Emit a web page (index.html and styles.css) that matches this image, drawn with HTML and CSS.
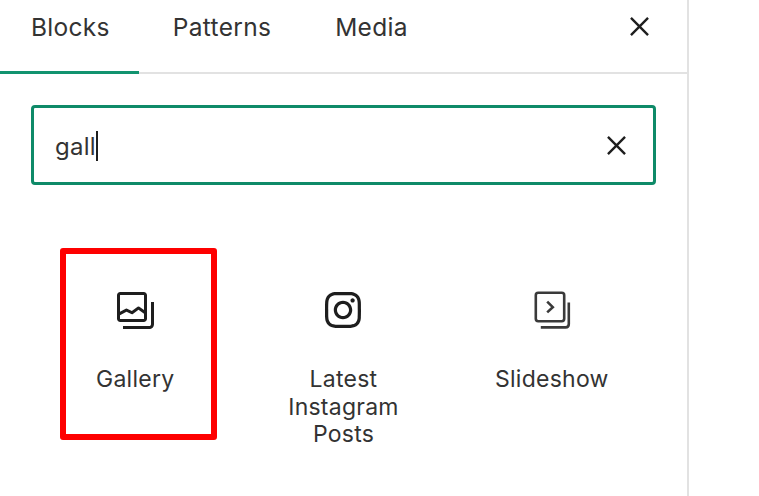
FILE: index.html
```html
<!DOCTYPE html>
<html lang="en">
  <head>
    <meta charset="utf-8" />
    <title>Block inserter</title>
    <link rel="stylesheet" href="styles.css">
  </head>
  <body>
    <div class="panel">
      <header class="tabs">
        <div class="tab active">Blocks</div>
        <div class="tab">Patterns</div>
        <div class="tab">Media</div>
        <svg class="close" viewBox="0 0 20 20"><path d="M1 1 19 19M19 1 1 19"/></svg>
      </header>
      <div class="search">
        <span class="search-text">gall</span><span class="caret"></span>
        <svg class="close clear" viewBox="0 0 20 20"><path d="M1 1 19 19M19 1 1 19"/></svg>
      </div>
      <main class="grid">
        <div class="item">
          <svg class="icon" viewBox="0 0 24 24"><path fill-rule="evenodd" d="M16.375 4.5H4.625a.125.125 0 0 0-.125.125v8.254l2.859-1.54a.75.75 0 0 1 .68-.016l2.384 1.142 2.89-2.074a.75.75 0 0 1 .874 0l2.313 1.66V4.625a.125.125 0 0 0-.125-.125zm.125 9.398-2.75-1.975-2.813 2.02a.75.75 0 0 1-.76.067l-2.444-1.17L4.5 14.583v1.792c0 .069.056.125.125.125h11.75a.125.125 0 0 0 .125-.125v-2.477zM4.625 3C3.728 3 3 3.728 3 4.625v11.75C3 17.273 3.728 18 4.625 18h11.75c.898 0 1.625-.727 1.625-1.625V4.625C18 3.728 17.273 3 16.375 3H4.625zM20 8v11c0 .69-.31 1-.999 1H6v1.5h13.001c1.52 0 2.499-.982 2.499-2.5V8H20z"/></svg>
          <div class="label">Gallery</div>
          <div class="highlight"></div>
        </div>
        <div class="item">
          <svg class="icon" viewBox="0 0 24 24"><path d="M12 4.622c2.403 0 2.688.01 3.637.052.877.04 1.354.187 1.67.31.42.163.72.358 1.036.673.315.315.51.615.673 1.035.123.317.27.794.31 1.67.043.95.052 1.235.052 3.638s-.01 2.688-.052 3.637c-.04.877-.187 1.354-.31 1.67-.163.42-.358.72-.673 1.036-.315.315-.615.51-1.035.673-.317.123-.794.27-1.67.31-.95.043-1.234.052-3.638.052s-2.688-.01-3.637-.052c-.877-.04-1.354-.187-1.67-.31-.42-.163-.72-.358-1.036-.673-.315-.315-.51-.615-.673-1.035-.123-.317-.27-.794-.31-1.67-.043-.95-.052-1.235-.052-3.638s.01-2.688.052-3.637c.04-.877.187-1.354.31-1.67.163-.42.358-.72.673-1.036.315-.315.615-.51 1.035-.673.317-.123.794-.27 1.67-.31.95-.043 1.235-.052 3.638-.052M12 3c-2.444 0-2.75.01-3.71.054s-1.613.196-2.185.418c-.592.23-1.094.538-1.594 1.04-.5.5-.807 1-1.037 1.593-.223.572-.375 1.226-.42 2.184C3.01 9.25 3 9.555 3 12s.01 2.75.054 3.71.196 1.613.418 2.186c.23.592.538 1.094 1.038 1.594s1.002.808 1.594 1.038c.572.222 1.227.375 2.185.418.96.044 1.266.054 3.71.054s2.75-.01 3.71-.054 1.613-.196 2.186-.418c.592-.23 1.094-.538 1.594-1.038s.808-1.002 1.038-1.594c.222-.572.375-1.227.418-2.185.044-.96.054-1.266.054-3.71s-.01-2.75-.054-3.71-.196-1.613-.418-2.186c-.23-.592-.538-1.094-1.038-1.594s-1.002-.808-1.594-1.038c-.572-.222-1.227-.375-2.185-.418C14.75 3.01 14.445 3 12 3zm0 4.378c-2.552 0-4.622 2.07-4.622 4.622s2.07 4.622 4.622 4.622 4.622-2.07 4.622-4.622S14.552 7.378 12 7.378zM12 15c-1.657 0-3-1.343-3-3s1.343-3 3-3 3 1.343 3 3-1.343 3-3 3zm4.804-8.884c-.596 0-1.08.484-1.08 1.08s.484 1.08 1.08 1.08c.596 0 1.08-.484 1.08-1.08s-.483-1.08-1.08-1.08z"/></svg>
          <div class="label">Latest Instagram Posts</div>
        </div>
        <div class="item">
          <svg class="icon line" viewBox="0 0 24 24"><rect x="3.9" y="3.4" width="14.2" height="14.2" rx="1.2"/><path d="M20.4 8.2V19c0 1-.6 1.7-1.6 1.7H6.4M9.6 7.8 12.4 10.6 9.6 13.2"/></svg>
          <div class="label">Slideshow</div>
        </div>
      </main>
    </div>
  </body>
</html>
```

FILE: styles.css
```css
html,
body {
  height: 100%;
  margin: 0;
  padding: 0;
  overflow: hidden;
  background: #fff;
  color: #333;
  font-family: Inter, 'Noto Sans', sans-serif;
  font-size: 23px;
  letter-spacing: 0.25px;
}
.panel {
  width: 689px;
  height: 100%;
  border-right: 2px solid #e2e2e2;
  box-sizing: border-box;
}
.tabs {
  display: flex;
  align-items: center;
  gap: 2px;
  height: 74px;
  padding-right: 38px;
  border-bottom: 2px solid #e2e2e2;
  box-sizing: border-box;
  font-size: 24.5px;
  letter-spacing: 0.3px;
}
.tab {
  display: flex;
  align-items: center;
  align-self: stretch;
  margin-bottom: -2px;
  padding: 0 30px 17px 32px;
  border-bottom: 3px solid transparent;
  box-sizing: border-box;
}
.tab.active {
  padding-left: 31px;
  padding-right: 29px;
  border-bottom-color: #12936f;
}
.close {
  width: 19px;
  height: 19px;
  margin-left: auto;
  margin-top: -20px;
  fill: none;
  stroke: #1e1e1e;
  stroke-width: 2.5;
}
.search {
  display: flex;
  align-items: center;
  height: 80px;
  margin: 31px 31px 0;
  padding: 2px 27px 0 21px;
  border: 3px solid #0e8a68;
  border-radius: 4px;
  box-sizing: border-box;
  font-size: 24px;
}
.caret {
  width: 2px;
  height: 30px;
  background: #1e1e1e;
}
.clear {
  margin-top: -2px;
}
.grid {
  display: grid;
  grid-template-columns: repeat(3, 1fr);
  margin: 63px 31px 0;
}
.item {
  position: relative;
  display: flex;
  flex-direction: column;
  align-items: center;
  padding: 38px 29px 0;
  text-align: center;
}
.icon {
  width: 48px;
  height: 48px;
  fill: #1e1e1e;
}
.icon.line {
  fill: none;
  stroke: #3a3a3a;
  stroke-width: 1.3;
}
.label {
  margin-top: 32px;
  line-height: 27.5px;
}
.highlight {
  position: absolute;
  left: 29px;
  top: 0;
  width: 157px;
  height: 192px;
  border: 6px solid #fe0000;
  border-radius: 3px;
  box-sizing: border-box;
}
```
